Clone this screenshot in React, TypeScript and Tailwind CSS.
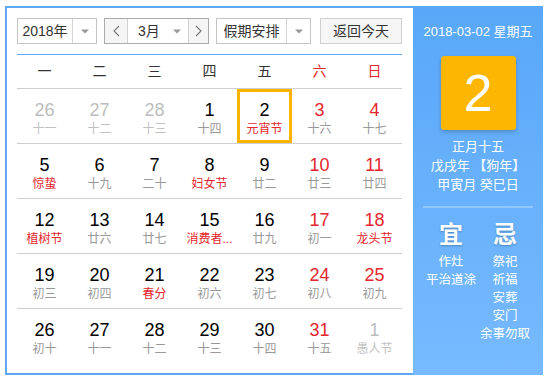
import React from "react"

const FONT = "font-['Liberation_Sans','Noto_Sans_CJK_SC',sans-serif]"

type Day = {
  n: number
  lunar: string
  other?: boolean
  weekend?: boolean
  fest?: boolean
  today?: boolean
}

const WEEK = ["一", "二", "三", "四", "五", "六", "日"]

const ROWS: Day[][] = [
  [
    { n: 26, lunar: "十一", other: true },
    { n: 27, lunar: "十二", other: true },
    { n: 28, lunar: "十三", other: true },
    { n: 1, lunar: "十四" },
    { n: 2, lunar: "元宵节", fest: true, today: true },
    { n: 3, lunar: "十六", weekend: true },
    { n: 4, lunar: "十七", weekend: true },
  ],
  [
    { n: 5, lunar: "惊蛰", fest: true },
    { n: 6, lunar: "十九" },
    { n: 7, lunar: "二十" },
    { n: 8, lunar: "妇女节", fest: true },
    { n: 9, lunar: "廿二" },
    { n: 10, lunar: "廿三", weekend: true },
    { n: 11, lunar: "廿四", weekend: true },
  ],
  [
    { n: 12, lunar: "植树节", fest: true },
    { n: 13, lunar: "廿六" },
    { n: 14, lunar: "廿七" },
    { n: 15, lunar: "消费者...", fest: true },
    { n: 16, lunar: "廿九" },
    { n: 17, lunar: "初一", weekend: true },
    { n: 18, lunar: "龙头节", weekend: true, fest: true },
  ],
  [
    { n: 19, lunar: "初三" },
    { n: 20, lunar: "初四" },
    { n: 21, lunar: "春分", fest: true },
    { n: 22, lunar: "初六" },
    { n: 23, lunar: "初七" },
    { n: 24, lunar: "初八", weekend: true },
    { n: 25, lunar: "初九", weekend: true },
  ],
  [
    { n: 26, lunar: "初十" },
    { n: 27, lunar: "十一" },
    { n: 28, lunar: "十二" },
    { n: 29, lunar: "十三" },
    { n: 30, lunar: "十四" },
    { n: 31, lunar: "十五", weekend: true },
    { n: 1, lunar: "愚人节", other: true },
  ],
]

function Caret() {
  return (
    <svg width="8" height="5" viewBox="0 0 8 5">
      <path d="M0 0.5h8L4 4.5z" fill="#9a9a9a" />
    </svg>
  )
}

function Chevron({ dir }: { dir: "l" | "r" }) {
  return (
    <svg width="7" height="12" viewBox="0 0 7 12">
      <path
        d={dir === "l" ? "M6 1L1 6l5 5" : "M1 1l5 5-5 5"}
        fill="none"
        stroke="#777"
        strokeWidth="1.1"
      />
    </svg>
  )
}

function Cell({ d }: { d: Day }) {
  const numColor = d.other ? "text-[#bdbdbd]" : d.weekend ? "text-[#e4262e]" : "text-black"
  const lunarColor = d.other ? "text-[#c2c2c2]" : d.fest ? "text-[#e4262e]" : "text-[#999]"
  return (
    <div
      className={`h-[54px] flex flex-col items-center ${
        d.today ? "border-[3px] border-[#fdb300] pt-[8px]" : "pt-[11px]"
      }`}
    >
      <div className={`text-[18px] leading-[20px] ${numColor}`}>{d.n}</div>
      <div className={`text-[12px] leading-[18px] whitespace-nowrap ${lunarColor}`}>{d.lunar}</div>
    </div>
  )
}

export default function App() {
  return (
    <div className={`w-[547px] h-[380px] bg-white pl-[5px] pt-[6px] ${FONT}`}>
      <div className="flex h-[369px] w-[538px]">
        {/* calendar */}
        <div className="w-[408px] border-l-2 border-t-2 border-b-2 border-[#5ea8f5] pl-[10px] pr-[11px] pt-[10px]">
          <div className="flex h-[26px] text-[14px] text-[#333]">
            <div className="flex w-[80px] border border-[#c4c4c4] bg-white">
              <div className="w-[55px] flex items-center justify-center border-r border-[#d4d4d4]">2018年</div>
              <div className="flex-1 flex items-center justify-center">
                <Caret />
              </div>
            </div>
            <div className="ml-[7px] flex w-[105px] border border-[#ababab]">
              <div className="w-[23px] flex items-center justify-center bg-[#f5f5f5] border-r border-[#d0d0d0]">
                <Chevron dir="l" />
              </div>
              <div className="w-[60px] flex items-center justify-between pl-[10px] pr-[7px] bg-white">
                <span>3月</span>
                <Caret />
              </div>
              <div className="flex-1 flex items-center justify-center bg-[#f5f5f5] border-l border-[#d0d0d0]">
                <Chevron dir="r" />
              </div>
            </div>
            <div className="ml-[7px] flex w-[95px] border border-[#c4c4c4] bg-white">
              <div className="w-[70px] flex items-center justify-center border-r border-[#d4d4d4]">假期安排</div>
              <div className="flex-1 flex items-center justify-center">
                <Caret />
              </div>
            </div>
            <div className="ml-[9px] flex-1 flex items-center justify-center border border-[#d0d0d0] bg-[#f6f6f6]">
              返回今天
            </div>
          </div>

          <div className="mt-[10px] h-px bg-[#5ea8f5]" />

          <div className="grid grid-cols-7 h-[34px] border-b border-[#cfcfcf] text-[14px]">
            {WEEK.map((w, i) => (
              <div
                key={w}
                className={`flex items-center justify-center ${i >= 5 ? "text-[#e4262e]" : "text-[#333]"}`}
              >
                {w}
              </div>
            ))}
          </div>

          {ROWS.map((row, ri) => (
            <div
              key={ri}
              className={`grid grid-cols-7 ${ri < ROWS.length - 1 ? "border-b border-[#cfcfcf]" : ""}`}
            >
              {row.map((d, ci) => (
                <Cell key={ci} d={d} />
              ))}
            </div>
          ))}
        </div>

        {/* side panel */}
        <div className="w-[130px] bg-linear-to-b from-[#58a7f8] to-[#77baff] text-white flex flex-col items-center pt-[18px]">
          <div className="text-[13px] leading-[16px]">2018-03-02 星期五</div>
          <div className="mt-[16px] w-[75px] h-[74px] rounded-[3px] bg-[#fdb702] shadow-[0_2px_4px_rgba(0,0,0,0.2)] flex items-center justify-center text-[52px] leading-none">
            2
          </div>
          <div className="mt-[7px] text-[13px] leading-[19px] text-center">
            <div>正月十五</div>
            <div>戊戌年 【狗年】</div>
            <div>甲寅月 癸巳日</div>
          </div>
          <div className="mt-[12px] w-[110px] h-[2px] bg-[#8fc6fb]" />
          <div className="mt-[14px] flex">
            <div className="w-[54px] flex flex-col items-center">
              <div className="text-[24px] leading-[26px] font-bold [text-shadow:0_1px_2px_rgba(0,0,0,0.25)]">宜</div>
              <div className="mt-[5px] text-[12.5px] leading-[18px] text-center">
                <div>作灶</div>
                <div>平治道涂</div>
              </div>
            </div>
            <div className="w-[54px] flex flex-col items-center">
              <div className="text-[24px] leading-[26px] font-bold [text-shadow:0_1px_2px_rgba(0,0,0,0.25)]">忌</div>
              <div className="mt-[5px] text-[12.5px] leading-[18px] text-center">
                <div>祭祀</div>
                <div>祈福</div>
                <div>安葬</div>
                <div>安门</div>
                <div>余事勿取</div>
              </div>
            </div>
          </div>
        </div>
      </div>
    </div>
  )
}
